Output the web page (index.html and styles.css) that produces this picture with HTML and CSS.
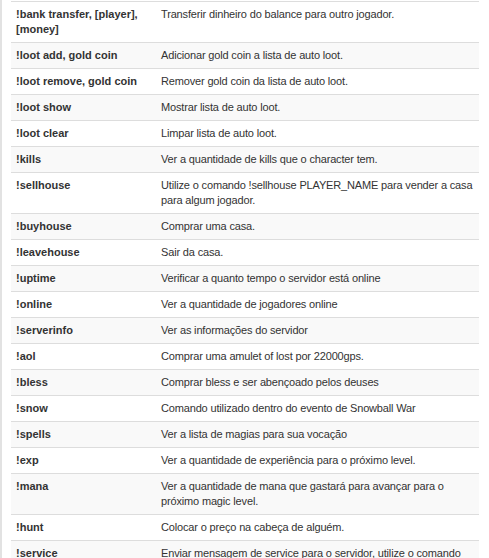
FILE: index.html
```html
<!DOCTYPE html>
<html lang="pt">
<head>
<meta charset="utf-8">
<title>Comandos</title>
<link rel="stylesheet" href="styles.css">
</head>
<body>
<div class="page">
<table class="cmds">
<tbody>
<tr><td class="cmd">!bank transfer, [player], [money]</td><td class="desc">Transferir dinheiro do balance para outro jogador.</td></tr>
<tr><td class="cmd">!loot add, gold coin</td><td class="desc">Adicionar gold coin a lista de auto loot.</td></tr>
<tr><td class="cmd">!loot remove, gold coin</td><td class="desc">Remover gold coin da lista de auto loot.</td></tr>
<tr><td class="cmd">!loot show</td><td class="desc">Mostrar lista de auto loot.</td></tr>
<tr><td class="cmd">!loot clear</td><td class="desc">Limpar lista de auto loot.</td></tr>
<tr><td class="cmd">!kills</td><td class="desc">Ver a quantidade de kills que o character tem.</td></tr>
<tr><td class="cmd">!sellhouse</td><td class="desc">Utilize o comando !sellhouse PLAYER_NAME para vender a casa para algum jogador.</td></tr>
<tr><td class="cmd">!buyhouse</td><td class="desc">Comprar uma casa.</td></tr>
<tr><td class="cmd">!leavehouse</td><td class="desc">Sair da casa.</td></tr>
<tr><td class="cmd">!uptime</td><td class="desc">Verificar a quanto tempo o servidor está online</td></tr>
<tr><td class="cmd">!online</td><td class="desc">Ver a quantidade de jogadores online</td></tr>
<tr><td class="cmd">!serverinfo</td><td class="desc">Ver as informações do servidor</td></tr>
<tr><td class="cmd">!aol</td><td class="desc">Comprar uma amulet of lost por 22000gps.</td></tr>
<tr><td class="cmd">!bless</td><td class="desc">Comprar bless e ser abençoado pelos deuses</td></tr>
<tr><td class="cmd">!snow</td><td class="desc">Comando utilizado dentro do evento de Snowball War</td></tr>
<tr><td class="cmd">!spells</td><td class="desc">Ver a lista de magias para sua vocação</td></tr>
<tr><td class="cmd">!exp</td><td class="desc">Ver a quantidade de experiência para o próximo level.</td></tr>
<tr><td class="cmd">!mana</td><td class="desc">Ver a quantidade de mana que gastará para avançar para o próximo magic level.</td></tr>
<tr><td class="cmd">!hunt</td><td class="desc">Colocar o preço na cabeça de alguém.</td></tr>
<tr><td class="cmd">!service</td><td class="desc">Enviar mensagem de service para o servidor, utilize o comando !service MENSAGEM</td></tr>
</tbody>
</table>
</div>
</body>
</html>
```

FILE: styles.css
```css
html, body {
  margin: 0;
  padding: 0;
  background: #fff;
}
body {
  font-family: "Liberation Sans", Arial, sans-serif;
  font-size: 11px;
  color: #333;
  height: 558px;
  overflow: hidden;
}
.page {
  border-left: 2px solid #e2e2e2;
  padding: 1px 10px 0 9px;
  min-height: 100%;
  box-sizing: border-box;
}
.cmds {
  width: 468px;
  border-collapse: collapse;
  border-spacing: 0;
}
.cmds td {
  padding: 5px;
  line-height: 15px;
  border-top: 1px solid #ddd;
  vertical-align: top;
  text-align: left;
}
.cmds tr:nth-child(even) td {
  background: #f9f9f9;
}
.cmds td.cmd {
  width: 135px;
  font-weight: bold;
}
.cmds td.desc {
  letter-spacing: -0.16px;
}
```
